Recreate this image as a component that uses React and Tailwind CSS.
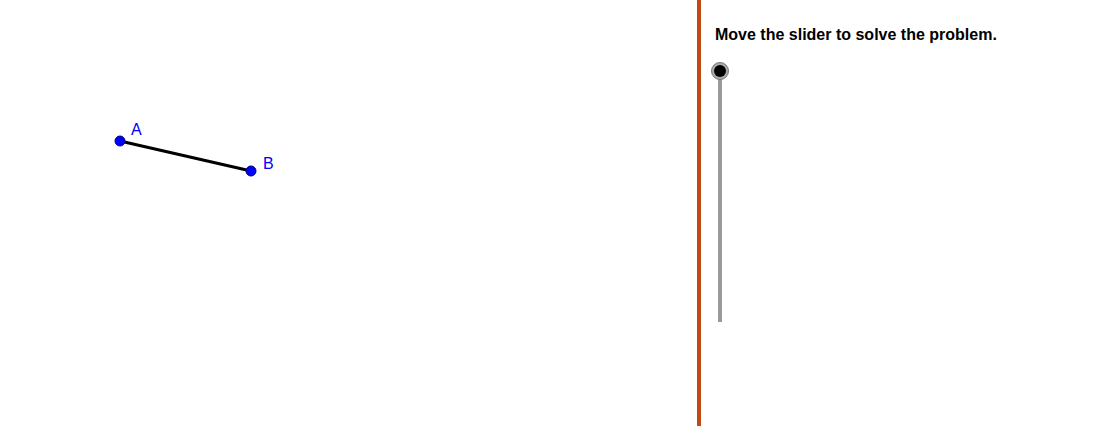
import React from 'react';

function Segment() {
  return (
    <svg width="697" height="426" className="block">
      <line x1="120" y1="141" x2="251" y2="171" stroke="#000" strokeWidth="3" />
      <circle cx="120" cy="141" r="5" fill="#0000ff" stroke="#00007a" strokeWidth="1" />
      <circle cx="251" cy="171" r="5" fill="#0000ff" stroke="#00007a" strokeWidth="1" />
      <text x="131" y="135" fill="#0000ff" fontSize="16" fontFamily="Liberation Sans, Arial, sans-serif">A</text>
      <text x="263" y="169" fill="#0000ff" fontSize="16" fontFamily="Liberation Sans, Arial, sans-serif">B</text>
    </svg>
  );
}

function Slider() {
  return (
    <svg width="22" height="266" className="block">
      <line x1="10" y1="10" x2="10" y2="261" stroke="#999" strokeWidth="4" />
      <circle cx="10" cy="10" r="8.5" fill="#aaa" stroke="#777" strokeWidth="1" />
      <circle cx="10" cy="10" r="6" fill="#000" />
    </svg>
  );
}

export default function App() {
  return (
    <div className="flex h-[426px] w-[1098px] bg-white overflow-hidden font-['Liberation_Sans',Arial,sans-serif]">
      <div className="w-[697px] shrink-0">
        <Segment />
      </div>
      <div className="w-[4px] shrink-0 bg-[#bf4a12]" />
      <div className="flex-1 pt-[26px]">
        <p className="pl-[14px] text-[16px] font-bold text-black leading-[18px]">Move the slider to solve the problem.</p>
        <div className="mt-[17px] pl-[9px]">
          <Slider />
        </div>
      </div>
    </div>
  );
}
